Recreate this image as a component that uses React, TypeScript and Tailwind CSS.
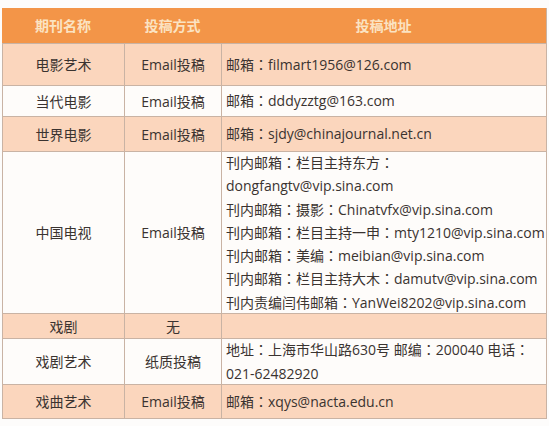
const font = "font-['Open_Sans','Noto_Sans_CJK_SC',sans-serif]";

type Row = {
  name: string;
  method: string;
  address: string[];
  h: string;
  bg: string;
};

const rows: Row[] = [
  { name: "电影艺术", method: "Email投稿", address: ["邮箱：filmart1956@126.com"], h: "h-[42px]", bg: "bg-[#fbd6bd]" },
  { name: "当代电影", method: "Email投稿", address: ["邮箱：dddyzztg@163.com"], h: "h-[31px]", bg: "bg-[#fefcfa]" },
  { name: "世界电影", method: "Email投稿", address: ["邮箱：sjdy@chinajournal.net.cn"], h: "h-[35px]", bg: "bg-[#fbd6bd]" },
  {
    name: "中国电视",
    method: "Email投稿",
    address: [
      "刊内邮箱：栏目主持东方：",
      "dongfangtv@vip.sina.com",
      "刊内邮箱：摄影：Chinatvfx@vip.sina.com",
      "刊内邮箱：栏目主持一申：mty1210@vip.sina.com",
      "刊内邮箱：美编：meibian@vip.sina.com",
      "刊内邮箱：栏目主持大木：damutv@vip.sina.com",
      "刊内责编闫伟邮箱：YanWei8202@vip.sina.com",
    ],
    h: "h-[162px]",
    bg: "bg-[#fefcfa]",
  },
  { name: "戏剧", method: "无", address: [], h: "h-[25px]", bg: "bg-[#fbd6bd]" },
  {
    name: "戏剧艺术",
    method: "纸质投稿",
    address: ["地址：上海市华山路630号 邮编：200040 电话：", "021-62482920"],
    h: "h-[46px]",
    bg: "bg-[#fefcfa]",
  },
  { name: "戏曲艺术", method: "Email投稿", address: ["邮箱：xqys@nacta.edu.cn"], h: "h-[34px]", bg: "bg-[#fbd6bd]" },
];

// full-width colon sits centred in the reference, as in the TC cut
function Line({ text }: { text: string }) {
  const parts = text.split("：");
  return (
    <div>
      {parts.map((p, i) => (
        <span key={i}>
          {p}
          {i < parts.length - 1 && (
            <span className="font-['Noto_Sans_CJK_TC',sans-serif]">：</span>
          )}
        </span>
      ))}
    </div>
  );
}

export default function App() {
  return (
    <div className={`${font} h-[426px] w-[549px] bg-[#fdfcfb] pt-[8px] pl-[2px]`}>
      <div className="w-[545px] border-b border-r border-[#c9b3a4]">
        <div className="flex h-[35px] items-center bg-[#f39548] text-[14px] font-bold text-[#fbe3c2]">
          <div className="w-[122px] text-center">期刊名称</div>
          <div className="w-[97px] text-center">投稿方式</div>
          <div className="flex-1 text-center">投稿地址</div>
        </div>
        {rows.map((r) => (
          <div
            key={r.name}
            className={`flex ${r.h} ${r.bg} border-t border-[#c9b3a4] text-[14px] text-[#3a3330]`}
          >
            <div className="flex w-[122px] items-center justify-center border-l border-[#c9b3a4]">
              {r.name}
            </div>
            <div className="flex w-[97px] items-center justify-center border-l border-[#c9b3a4]">
              {r.method}
            </div>
            <div className="flex flex-1 flex-col justify-center border-l border-[#c9b3a4] pl-[4px] leading-[23.3px] whitespace-nowrap">
              {r.address.map((a) => (
                <Line key={a} text={a} />
              ))}
            </div>
          </div>
        ))}
      </div>
    </div>
  );
}
